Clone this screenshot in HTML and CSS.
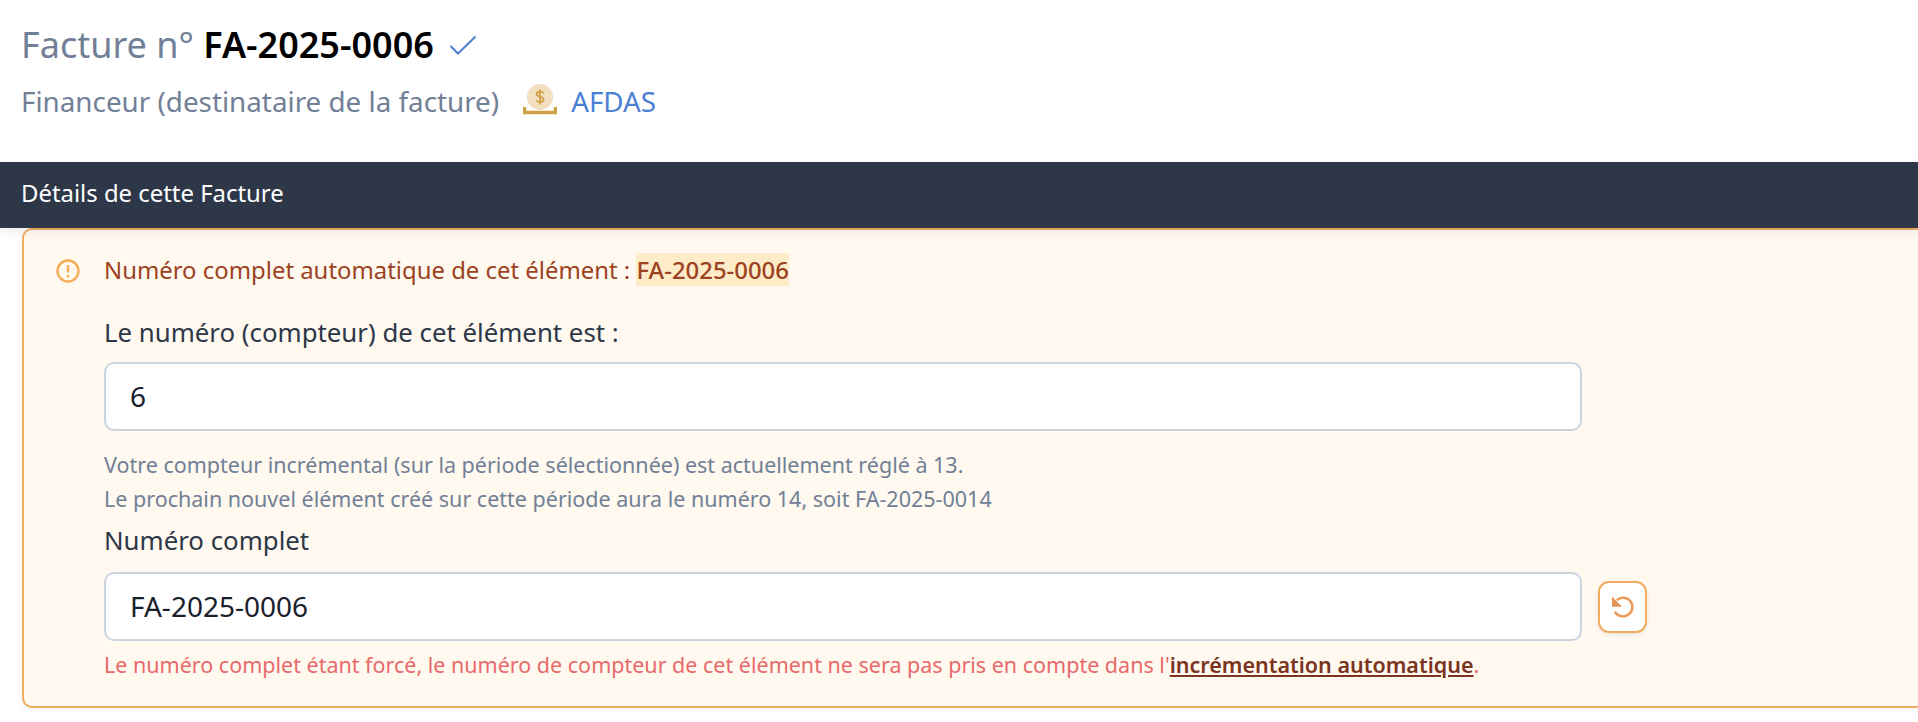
FILE: index.html
```html
<!DOCTYPE html>
<html lang="fr">
<head>
<meta charset="utf-8">
<title>Facture FA-2025-0006</title>
<link rel="stylesheet" href="styles.css">
</head>
<body>
<header class="head">
  <h1 class="title">Facture n° <strong class="title-num">FA-2025-0006</strong>
    <svg class="check" viewBox="0 0 28 20" fill="none"><path d="M1.5 11l7.5 7.5L26.5 1.5"/></svg>
  </h1>
  <p class="sub">Financeur (destinataire de la facture)
    <svg class="coin" viewBox="0 0 34 32"><circle cx="17" cy="13" r="13" fill="#f1dfc0"/><path d="M1.5 23v5.5h31V23" fill="none" stroke="#d1a044" stroke-width="3.4"/><path d="M20.5 9.5c-.6-1.3-1.9-1.8-3.5-1.8-2 0-3.4 1-3.4 2.6 0 3.4 7 1.8 7 5.2 0 1.600-1.500 2.600-3.600 2.600-1.700 0-3-.7-3.600-2M17 5.500v15" fill="none" stroke="#d1a044" stroke-width="1.700"/></svg>
    <a class="payer" href="#">AFDAS</a>
  </p>
</header>
<div class="bar">Détails de cette Facture</div>
<section class="box">
  <div class="notice">
    <svg class="warn" viewBox="0 0 24 24" fill="none"><circle cx="12" cy="12.500" r="10.500"/><path d="M12 6.500v7.500M12 16.500v2.500"/></svg>
    <span>Numéro complet automatique de cet élément : <mark class="mark">FA-2025-0006</mark></span>
  </div>
  <form class="form">
    <label class="label">Le numéro (compteur) de cet élément est :</label>
    <div class="input">6</div>
    <p class="help">Votre compteur incrémental (sur la période sélectionnée) est actuellement réglé à 13.<br>Le prochain nouvel élément créé sur cette période aura le numéro 14, soit FA-2025-0014</p>
    <label class="label label-full">Numéro complet</label>
    <div class="row">
      <div class="input">FA-2025-0006</div>
      <button class="reset" type="button" aria-label="Réinitialiser">
        <svg viewBox="0 0 24 24" fill="none"><path class="arc" d="M7 6.500c1.300-1.200 3-2 5-2 4.200 0 7.500 3.300 7.500 7.500S16.200 19.500 12 19.500c-2.800 0-5.200-1.500-6.500-3.800"/><path class="head-arrow" d="M3.200 3.500v8.200h8z"/></svg>
      </button>
    </div>
    <p class="error">Le numéro complet étant forcé, le numéro de compteur de cet élément ne sera pas pris en compte dans l'<a class="error-link" href="#">incrémentation automatique</a>.</p>
  </form>
</section>
</body>
</html>
```
FILE: styles.css
```css
* { box-sizing: border-box; }
html, body { margin: 0; padding: 0; height: 722px; overflow: hidden; background: #fff; }
body { font-family: "Noto Sans", "Open Sans", sans-serif; color: #2d3748; }

.head { height: 162px; padding: 20px 21px 0; }
.title { margin: 0; height: 50px; font-size: 36px; line-height: 50px; font-weight: 400; color: #718096; display: flex; align-items: center; white-space: pre; }
.title-num { font-weight: 600; color: #000; }
.check { width: 28px; height: 20px; margin-left: 15px; stroke: #4a80d4; stroke-width: 2; }
.sub { margin: 11px 0 0; height: 40px; font-size: 27.8px; line-height: 40px; color: #718096; display: flex; align-items: center; }
.coin { width: 34px; height: 32px; margin: -2px 0 0 24px; }
.payer { color: #4a80d4; text-decoration: none; margin-left: 14px; }

.bar { height: 66px; background: #2d3748; color: #fff; font-size: 23.900px; line-height: 62px; padding-left: 21px; box-shadow: 0 4px 10px rgba(0,0,0,.08); position: relative; }

.box { margin: 0 -40px 0 22px; height: 480px; padding: 23px 0 0 32px; background: #fff9f0; border: 2px solid #f0ad5f; border-radius: 10px; box-shadow: 0 2px 6px rgba(0,0,0,.05); }
.notice { display: flex; align-items: center; gap: 24px; font-size: 23.900px; line-height: 34px; color: #9c4221; }
.warn { width: 24px; height: 25px; stroke: #f6ad55; stroke-width: 2.400; }
.mark { background: #feebc8; color: inherit; font-weight: 500; }

.form { margin-left: 48px; }
.label { display: block; font-size: 25.800px; line-height: 34px; margin-top: 28px; color: #2d3748; }
.input { width: 1478px; height: 69px; margin-top: 13px; padding-left: 24px; background: #fff; border: 2px solid #cbd5e0; border-radius: 10px; font-size: 28px; line-height: 65px; color: #1a202c; }
.help { margin: 17px 0 0; font-size: 21.500px; line-height: 34px; color: #718096; }
.label-full { margin-top: 7px; }
.row { display: flex; align-items: center; }
.row .input { margin-top: 15px; }
.reset { width: 49px; height: 52px; margin: 15px 0 0 16px; padding: 0; background: #fff; border: 2px solid #f0ad5f; border-radius: 11px; box-shadow: 0 2px 4px rgba(0,0,0,.08); display: flex; align-items: center; justify-content: center; }
.reset svg { width: 30px; height: 30px; }
.arc { stroke: #ed9a55; stroke-width: 2; }
.head-arrow { fill: #e59258; }
.error { margin: 7px 0 0; font-size: 21.500px; line-height: 34px; color: #e86a6a; white-space: nowrap; }
.error-link { color: #7b341e; font-weight: 600; }
```
